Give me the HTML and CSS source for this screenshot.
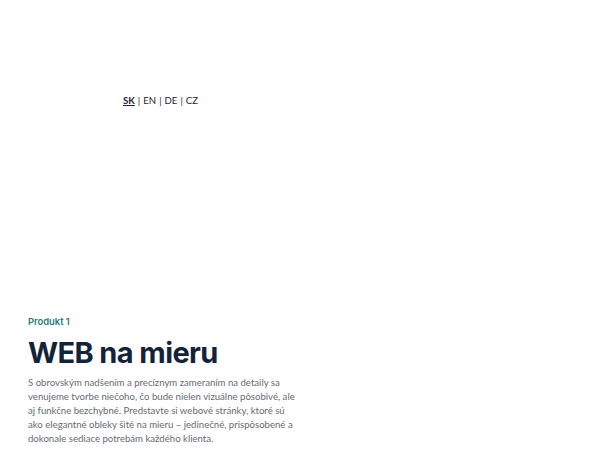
FILE: index.html
```html
<!DOCTYPE html>
<html lang="sk">
<head>
<meta charset="utf-8">
<title>WEB na mieru</title>
<link rel="stylesheet" href="styles.css">
</head>
<body>
<header class="top">
  <nav class="langs">
    <a class="lang active" href="#">SK</a><span class="sep">|</span><a class="lang" href="#">EN</a><span class="sep">|</span><a class="lang" href="#">DE</a><span class="sep">|</span><a class="lang" href="#">CZ</a>
  </nav>
</header>
<main class="product">
  <p class="kicker">Produkt 1</p>
  <h1 class="title">WEB na mieru</h1>
  <p class="lead">S obrovským nadšením a precíznym zameraním na detaily sa venujeme tvorbe niečoho, čo bude nielen vizuálne pôsobivé, ale aj funkčne bezchybné. Predstavte si webové stránky, ktoré sú ako elegantné obleky šité na mieru – jedinečné, prispôsobené a dokonale sediace potrebám každého klienta.</p>
</main>
</body>
</html>
```
FILE: styles.css
```css
html, body {
  margin: 0;
  padding: 0;
  background: #ffffff;
}
body {
  width: 600px;
  height: 450px;
  overflow: hidden;
  font-family: Lato, "Noto Sans", "Liberation Sans", sans-serif;
}
.top {
  padding: 94px 0 0 123px;
  height: 217px;
  box-sizing: border-box;
}
.langs {
  display: flex;
  align-items: center;
  gap: 3px;
  font-size: 9.6px;
  line-height: 13px;
  color: #1b2537;
}
.lang {
  color: #1b2537;
  text-decoration: none;
}
.lang.active {
  font-weight: 700;
  text-decoration: underline;
}
.sep {
  color: #1b2537;
}
.product {
  padding: 98px 0 0 28px;
  width: 272px;
}
.kicker {
  margin: 0;
  font-family: Inter, Lato, sans-serif;
  font-size: 9.4px;
  line-height: 14px;
  font-weight: 600;
  color: #2b7a78;
}
.title {
  margin: 6px 0 0;
  font-family: Inter, Lato, sans-serif;
  font-size: 29px;
  line-height: 36px;
  font-weight: 700;
  color: #13233a;
  letter-spacing: -0.6px;
}
.lead {
  margin: 5px 0 0;
  font-size: 9.6px;
  line-height: 14px;
  color: #666b73;
}
```
